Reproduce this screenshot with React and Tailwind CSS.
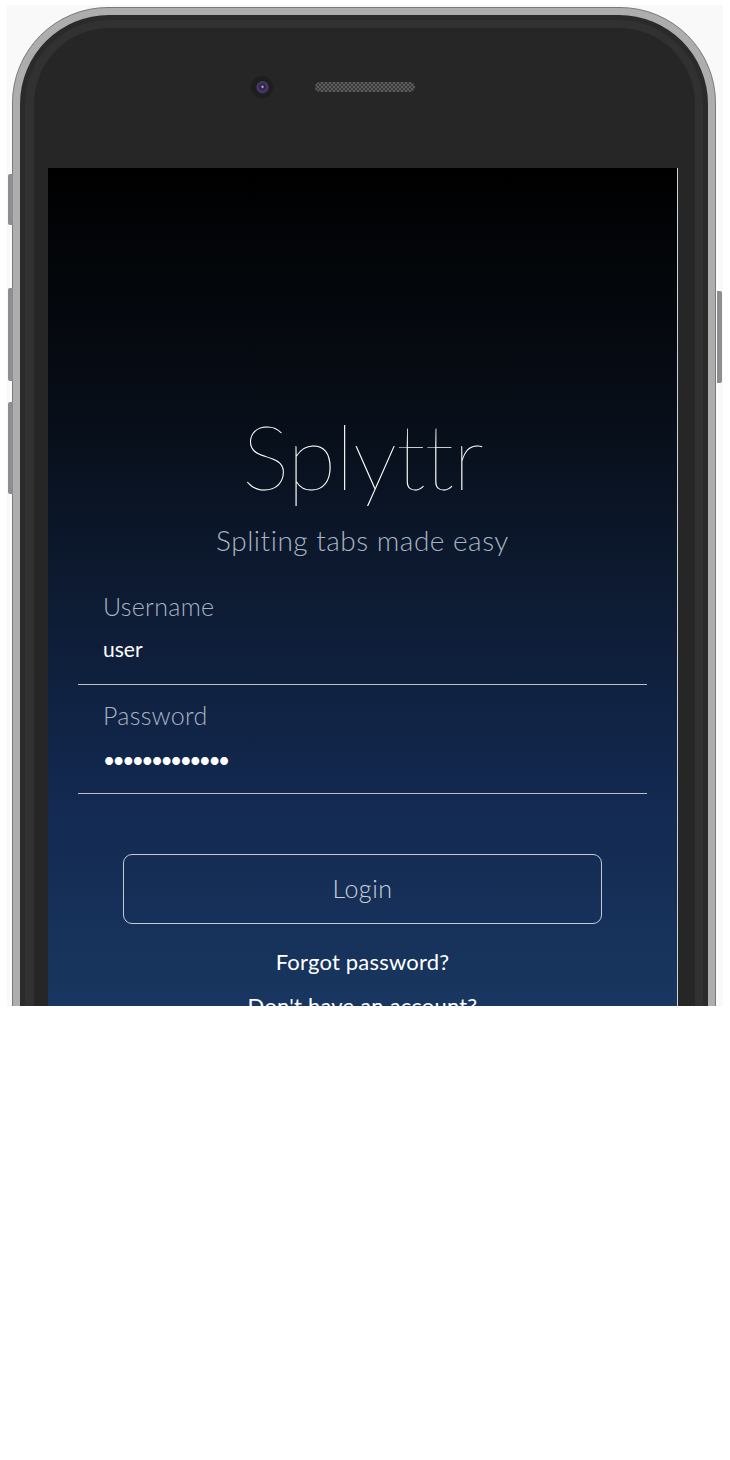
const sans = "font-['Lato','Open_Sans',sans-serif]";

function SideButton({ className }) {
  return <div className={`absolute w-[5px] bg-[#8c8c91] ${className}`} />;
}

function Field({ label, value, secret, className = '' }) {
  return (
    <div className={`border-b border-[#b9bfc8] pl-[25px] ${secret ? 'pb-[23px]' : 'pb-[25px]'} ${className}`}>
      <div className="text-[25px] leading-none font-light tracking-[0.3px] text-[#a8b2c2]">{label}</div>
      <div className={`text-[21px] leading-none text-white ${secret ? 'mt-[21px] tracking-[-2.6px]' : 'mt-[19px]'}`}>{value}</div>
    </div>
  );
}

function Screen() {
  return (
    <div className={`w-[630px] h-[1150px] border-r border-[#cfd3da] bg-[linear-gradient(180deg,#000000_0px,#070d16_232px,#0d1b33_432px,#132951_632px,#18365f_832px,#1c3d6c_1000px)] ${sans}`}>
      <div className="pt-[242px] text-center">
        <h1 className="text-[90px] leading-none font-thin tracking-[-1px] text-white">Splyttr</h1>
        <p className="mt-[26px] text-[28px] leading-none font-light tracking-[0.5px] text-[#aab4c3]">Spliting tabs made easy</p>
      </div>

      <div className="mt-[22px] px-[30px]">
        <Field label="Username" value="user" className="pt-[18px]" />
        <Field label="Password" value="•••••••••••••" secret className="pt-[18px]" />

        <button className="mt-[60px] mx-[45px] w-[479px] h-[70px] rounded-[9px] border border-[#c6cbd3] text-[25px] font-light tracking-[0.5px] text-[#c9d0da]">
          Login
        </button>

        <p className="mt-[27px] text-center text-[22px] leading-none tracking-[0.2px] text-white">Forgot password?</p>
        <p className="mt-[22px] text-center text-[22px] leading-none tracking-[0.2px] text-white">Don't have an account?</p>
      </div>
    </div>
  );
}

function Phone() {
  return (
    <div className="relative w-[704px]">
      <SideButton className="-left-[4px] top-[167px] h-[51px] rounded-l-[2px]" />
      <SideButton className="-left-[4px] top-[281px] h-[93px] rounded-l-[2px]" />
      <SideButton className="-left-[4px] top-[395px] h-[92px] rounded-l-[2px]" />
      <SideButton className="-right-[6px] top-[284px] h-[92px] rounded-r-[2px]" />

      <div className="rounded-[96px] border border-[#7a7a7a] bg-[#adadad] p-[7px]">
        <div className="rounded-[89px] bg-[#2a2a2a] p-[5px]">
          <div className="rounded-[84px] bg-[#313131] pt-[8px] pl-[9px] pr-[8px]">
            <div className="rounded-[76px] bg-[#262626] pl-[14px] pr-[17px] pt-[48px] pb-[80px]">
              <div className="flex items-center justify-center h-[22px] mb-[70px] pl-[4px]">
                <div className="w-[22px] h-[22px] rounded-full bg-[#1e1e1e] flex items-center justify-center">
                  <div className="w-[13px] h-[13px] rounded-full bg-[radial-gradient(circle_at_50%_45%,#cfc6e6_0px,#2a2144_2px,#4a3a6e_5px,#2a2236_7px)]" />
                </div>
                <div className="ml-[42px] w-[100px] h-[10px] rounded-full bg-[repeating-conic-gradient(#5c5c5c_0%_25%,#3a3a3a_0%_50%)] bg-size-[4px_4px]" />
                <div className="w-[64px]" />
              </div>
              <Screen />
            </div>
          </div>
        </div>
      </div>
    </div>
  );
}

export default function App() {
  return (
    <div className="w-[730px] h-[1460px] bg-white pt-[5px] pl-[7px]">
      <div className="w-[716px] h-[1001px] bg-[#f9f9f9] overflow-hidden pl-[5px] pt-[2px]">
        <Phone />
      </div>
    </div>
  );
}
